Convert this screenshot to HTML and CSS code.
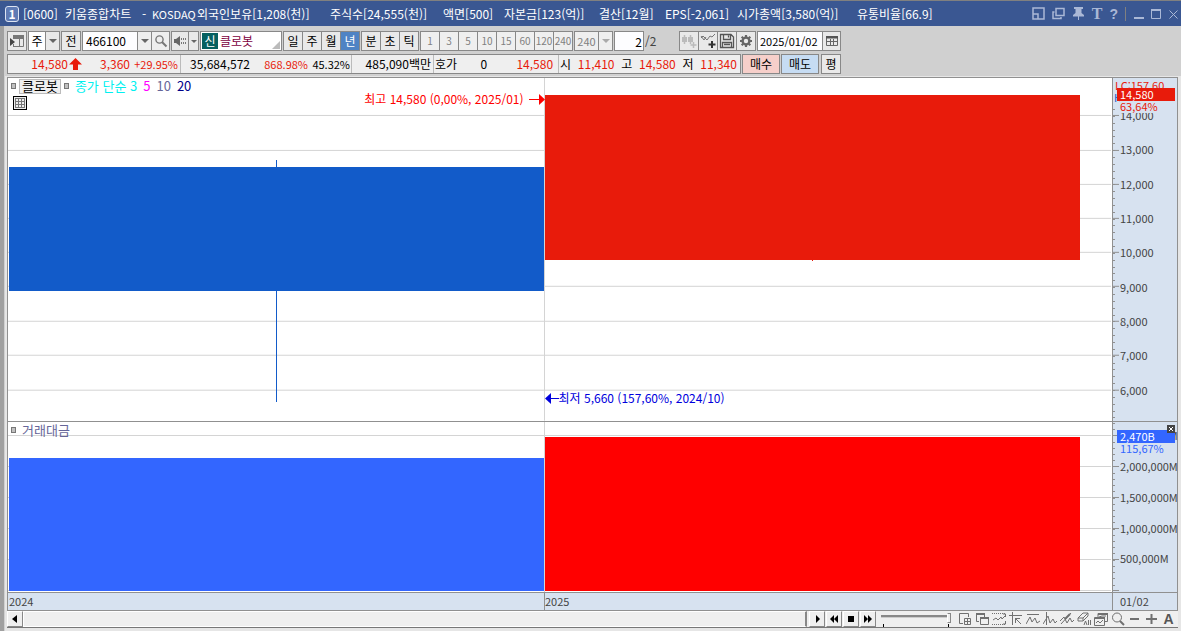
FILE: index.html
```html
<!DOCTYPE html>
<html lang="ko">
<head>
<meta charset="utf-8">
<title>키움종합차트</title>
<link rel="stylesheet" href="styles.css">
</head>
<body>
<div class="window">
  <header class="titlebar">
    <span class="badge">1</span>
    <h1 class="title">
      <span class="w42">[0600]</span><span class="w77">키움종합차트</span><span class="w10t">-</span><span class="w45 fit">KOSDAQ</span><span class="w133">외국인보유[1,208(천)]</span><span class="w113">주식수[24,555(천)]</span><span class="w61">액면[500]</span><span class="w95">자본금[123(억)]</span><span class="w66">결산[12월]</span><span class="w72">EPS[-2,061]</span><span class="w120">시가총액[3,580(억)]</span><span>유통비율[66.9]</span>
    </h1>
    <div class="wincontrols">
      <button aria-label="도킹"><svg width="13" height="13" viewBox="0 0 13 13"><path d="M1 1h11v11H1zM1 7h5v5" fill="none" stroke="currentColor" stroke-width="1.500"/></svg></button>
      <button aria-label="복제"><svg width="13" height="13" viewBox="0 0 13 13"><path d="M4 1.500h8v7H4zM2.500 5H1v6.500h8V10" fill="none" stroke="currentColor" stroke-width="1.500"/></svg></button>
      <button aria-label="고정"><svg width="13" height="15" viewBox="0 0 13 15"><path d="M2 1h9v2H9.500v4l2.500 2v1.500H7V14H6v-3.500H1V9l2.500-2V3H2z" fill="currentColor"/></svg></button>
      <button aria-label="글꼴" class="serif">T</button>
      <button aria-label="도움말" class="help">?</button>
      <i class="sep"></i>
      <button aria-label="최소화"><svg width="11" height="13" viewBox="0 0 11 13"><path d="M1 11h10" stroke="currentColor" stroke-width="2"/></svg></button>
      <button aria-label="최대화"><svg width="11" height="13" viewBox="0 0 11 13"><path d="M.5 2.500v9h9v-9z" fill="none" stroke="currentColor"/><path d="M0 3h10" stroke="currentColor" stroke-width="2"/></svg></button>
      <button aria-label="닫기"><svg width="9" height="13" viewBox="0 0 9 13"><path d="M.5 3.500l8 8M8.500 3.500l-8 8" stroke="currentColor"/></svg></button>
    </div>
  </header>

  <div class="body">
    <div class="tools">
      <div class="row">
        <button class="box sq" aria-label="패널"><svg width="14" height="14" viewBox="0 0 14 14"><path d="M3 1.500h10.500v11H3M3 4.500h10.500M9.500 4.500v8M3.500 1v4M3.500 10v3" fill="none" stroke="#777"/><path d="M4 1h10v3H4z" fill="#777"/><path d="M0 4l5 4-5 4z" fill="#444"/></svg></button>
        <div class="box group"><button class="white w17">주</button><button class="w14 arrow" aria-label="종류 선택"></button></div>
        <button class="box sq">전</button>
        <div class="box group code"><input class="codein" aria-label="종목코드" value="466100"><button class="w13 arrow" aria-label="종목 목록"></button><button class="w18" aria-label="검색"><svg width="14" height="14" viewBox="0 0 14 14"><circle cx="5.500" cy="5.500" r="3.600" fill="none" stroke="#777" stroke-width="1.400"/><path d="M8 8l4.500 4.500" stroke="#777" stroke-width="2"/></svg></button></div>
        <div class="box group"><button class="w16" aria-label="소리"><svg width="14" height="12" viewBox="0 0 14 12"><path d="M1 4h2l4-3v10L3 8H1z" fill="#666"/><path d="M8.500 3v6M10.500 3v6M12.500 3v6" stroke="#777" stroke-dasharray="2 2"/></svg></button><button class="w10 arrow small" aria-label="소리 선택"></button></div>
        <div class="box name"><span class="new">신</span><span class="stock">클로봇</span><i class="corner"></i></div>
        <div class="box group period"><button>일</button><button>주</button><button>월</button><button class="on">년</button></div>
        <div class="box group period"><button>분</button><button>초</button><button>틱</button></div>
        <div class="box group period dim"><button>1</button><button>3</button><button>5</button><button>10</button><button>15</button><button>60</button><button>120</button><button>240</button></div>
        <div class="box group dim"><button class="w24">240</button><button class="w14 arrow pale" aria-label="분 선택"></button></div>
        <input class="box count" aria-label="개수" value="2"><span class="total">/2</span>
        <div class="box group icons">
          <button aria-label="차트 추가"><svg width="16" height="16" viewBox="0 0 16 16"><path d="M1 4h5v5H1zM7 4h5v5H7z" fill="#bbb"/><path d="M3.500 2v9M9.500 2v9M12.500 9v6M9.500 12h6" stroke="#bbb" stroke-width="1.500"/></svg></button>
          <button aria-label="지표 추가"><svg width="16" height="16" viewBox="0 0 16 16"><path d="M1 5l2-2 4 4 3-4 2 1 3-3M1 3l3 4 2-3" fill="none" stroke="#777"/><path d="M12 8v7M8.500 11.500h7" stroke="#333" stroke-width="2"/></svg></button>
          <button aria-label="저장"><svg width="16" height="16" viewBox="0 0 16 16"><path d="M1.500 1.500H12L14.500 4v10.500h-13zM4.500 1.500v5h7v-5M3.500 14v-4.500h9V14M5 11.500h6M9.500 2.500v2" fill="none" stroke="#555" stroke-width="1.300"/></svg></button>
          <button aria-label="설정"><svg width="14" height="14" viewBox="0 0 14 14"><circle cx="7" cy="7" r="3.400" fill="none" stroke="#666" stroke-width="2.400"/><path d="M7 1v2M7 11v2M1 7h2M11 7h2M2.700 2.700l1.500 1.500M9.800 9.800l1.500 1.500M2.700 11.300l1.500-1.500M9.800 4.200l1.500-1.500" stroke="#666" stroke-width="2.200"/></svg></button>
        </div>
        <div class="box group"><input class="date" aria-label="날짜" value="2025/01/02"><button class="w18" aria-label="달력"><svg width="12" height="12" viewBox="0 0 12 12"><path d="M.5 1.500h11v9H.5zM4.500 4v6M7.500 4v6M1 6.500h10" fill="none" stroke="#666"/><path d="M0 1h12v2.500H0z" fill="#555"/></svg></button></div>
      </div>

      <div class="row">
        <div class="box quote">
          <div class="cell q1 red"><span class="r60">14,580</span><svg width="13" height="13" viewBox="0 0 13 13"><path d="M6.500 0L13 6.500H9V12H4V6.500H0z" fill="#e81b0b"/></svg><span class="r49">3,360</span><span class="fit r48">+29.95%</span></div>
          <div class="cell q2"><span class="r70">35,684,572</span><span class="fit red r58">868.98%</span><span class="fit r41">45.32%</span></div>
          <div class="cell q3"><span>485,090백만</span></div>
          <div class="cell q4"><span>호가</span><span class="r28">0</span><span class="red r66">14,580</span></div>
          <div class="cell q5"><span>시</span><span class="red">11,410</span><span>고</span><span class="red">14,580</span><span>저</span><span class="red">11,340</span></div>
        </div>
        <button class="box buy">매수</button>
        <button class="box sell">매도</button>
        <button class="box sq">평</button>
      </div>
    </div>

    <main class="chart">
      <section class="panel price">
        <div class="plot">
          <svg class="fill" viewBox="0 0 1104 343" preserveAspectRatio="none" shape-rendering="crispEdges">
            <path d="M0 37.500h1103M0 72.500h1103M0 106.500h1103M0 140.500h1103M0 174.500h1103M0 208.500h1103M0 243.500h1103M0 277.500h1103M0 312.500h1103M536.500 0v343" stroke="#d4d4d4" fill="none"/>
            <path d="M1 89h535v124H1zM268 82h1v242h-1z" fill="#125bc9"/>
            <path d="M537 17h535v165H537zM804 182h1v1h-1z" fill="#e81b0b"/>
          </svg>
          <div class="legend"><i class="mark"></i><button class="tag">클로봇</button><i class="mark"></i><span class="cyan">종가 단순 3</span><span class="magenta">5</span><span class="violet">10</span><span class="navy">20</span></div>
          <button class="tablebtn" aria-label="표"><svg width="12" height="12" viewBox="0 0 12 12" shape-rendering="crispEdges"><path d="M1.500 1.500h9v9h-9zM4.500 1v10M7.500 1v10M1 4.500h10M1 7.500h10" fill="none" stroke="#777"/></svg></button>
          <div class="note high"><span>최고 14,580 (0,00%, 2025/01)</span><svg width="16" height="12" viewBox="0 0 16 12"><path d="M0 6.500h11" stroke="#f00"/><path d="M10 1l6 5.500-6 5.500z" fill="#f00"/></svg></div>
          <div class="note low"><svg width="14" height="12" viewBox="0 0 14 12"><path d="M4 6.500h10" stroke="#00d"/><path d="M6 1L0 6.500l6 5.500z" fill="#00d"/></svg><span>최저 5,660 (157,60%, 2024/10)</span></div>
        </div>
        <div class="axis">
          <svg class="fill" viewBox="0 0 64 343" preserveAspectRatio="none" shape-rendering="crispEdges"><path d="M1 31v312" stroke="#909090" stroke-width="2" stroke-dasharray="1 5.860"/><path d="M0 37.500h6M0 72.500h6M0 106.500h6M0 140.500h6M0 174.500h6M0 208.500h6M0 243.500h6M0 277.500h6M0 312.500h6" stroke="#909090"/></svg>
          <span class="lc">LC:157,60</span><span class="hc">H</span>
          <ol class="scale pscale"><li>14,000</li><li>13,000</li><li>12,000</li><li>11,000</li><li>10,000</li><li>9,000</li><li>8,000</li><li>7,000</li><li>6,000</li></ol>
          <span class="now">14,580</span><span class="pct">63,64%</span>
        </div>
      </section>

      <section class="panel volume">
        <div class="plot">
          <svg class="fill" viewBox="0 0 1104 170" preserveAspectRatio="none" shape-rendering="crispEdges">
            <path d="M0 13.500h1103M0 44.500h1103M0 75.500h1103M0 106.500h1103M0 137.500h1103M0 168.500h1103M536.500 0v170" stroke="#d4d4d4" fill="none"/>
            <path d="M1 36h535v133H1z" fill="#36f"/>
            <path d="M537 15h535v154H537z" fill="#f00"/>
          </svg>
          <div class="legend"><i class="mark"></i><span class="violet">거래대금</span></div>
        </div>
        <div class="axis">
          <svg class="fill" viewBox="0 0 64 170" preserveAspectRatio="none" shape-rendering="crispEdges"><path d="M1 1v168" stroke="#909090" stroke-width="2" stroke-dasharray="1 5.200"/><path d="M0 13.500h6M0 44.500h6M0 75.500h6M0 106.500h6M0 137.500h6M0 168.500h6" stroke="#909090"/></svg>
          <ol class="scale vscale"><li>2,500,000M</li><li>2,000,000M</li><li>1,500,000M</li><li>1,000,000M</li><li>500,000M</li></ol>
          <span class="now vnow">2,470B</span><span class="pct vpct">115,67%</span>
          <button class="close" aria-label="지표 닫기"><svg width="8" height="8" viewBox="0 0 8 8"><path d="M2 2l4 4M6 2L2 6" stroke="#fff"/></svg></button>
        </div>
      </section>

      <div class="dates"><div class="years"><span>2024</span><span>2025</span></div><span class="day">01/02</span></div>
    </main>

    <footer class="bottom">
      <button class="raised" aria-label="왼쪽"><svg width="8" height="8" viewBox="0 0 8 8"><path d="M6 0v8L1 4z"/></svg></button>
      <div class="track"></div>
      <div class="player">
        <button class="raised" aria-label="오른쪽"><svg width="10" height="8" viewBox="0 0 10 8"><path d="M4 0v8l4-4z"/></svg></button>
        <button class="raised" aria-label="뒤로"><svg width="10" height="8" viewBox="0 0 10 8"><path d="M5 0v8L1 4zM9 0v8L5 4z"/></svg></button>
        <button class="raised" aria-label="정지"><svg width="10" height="8" viewBox="0 0 10 8"><path d="M2 1h6v6H2z"/></svg></button>
        <button class="raised" aria-label="앞으로"><svg width="10" height="8" viewBox="0 0 10 8"><path d="M1 0v8l4-4zM5 0v8l4-4z"/></svg></button>
      </div>
      <div class="slider"><input type="range" aria-label="확대 비율" min="0" max="100" value="100"><div class="stops"><i></i><i></i></div></div>
      <div class="drawtools">
        <button aria-label="창 추가"><svg viewBox="0 0 14 14"><path d="M5 11.500H1.500v-10h9V5M6.500 6.500h6v6h-6zM9.500 6v7M6 9.500h7"/></svg></button>
        <button aria-label="창 겹침"><svg viewBox="0 0 14 14"><path d="M4 9.500H1.500v-8h8V5M5.500 5.500h8v7h-8z"/><path d="M1 2h9M5 6h9" stroke-width="2"/></svg></button>
        <button aria-label="영역"><svg viewBox="0 0 14 14"><path d="M0 1.500h14M0 12.500h14" stroke-dasharray="1 1"/><path d="M1 8l3-2 2 2 3-3 1 2 3-3M11 2h2.500v3M11 12h2.500V9"/></svg></button>
        <button aria-label="기준선"><svg viewBox="0 0 14 14"><path d="M0 3.500h13M3.500 0v13M6 6l6 6M6 6.500h5M6.500 6v5"/></svg></button>
        <button aria-label="수평선"><svg viewBox="0 0 14 14"><path d="M1 2.500h12M0 12l4-7 2 5 3-4 2 5 3-2"/></svg></button>
        <button aria-label="수직선"><svg viewBox="0 0 14 14"><path d="M3.500 0v13M0 12l5-8 2 7 3-4 2 4 2-2"/></svg></button>
        <button aria-label="추세선"><svg viewBox="0 0 14 14"><path d="M1 12L11 1M0 9l4-4 3 6 3-5 2 4 2-2"/><path d="M5 7l5-5" stroke-width="2"/></svg></button>
        <button aria-label="모두 지우기"><svg viewBox="0 0 14 14"><path d="M1 6l5-5h5v3L6 9H1zM1 6h5l5-5M6 6v3M7 13l1.500-4 1.500 4M11.500 8v5M13.500 8v5"/></svg></button>
        <button aria-label="차트 복사"><svg viewBox="0 0 14 14"><path d="M4 5V1.500h9.500v8H11M.5 5.500h10v8H.5zM2 11l2-2 2 2 3-3M5 5l3-1 4 0"/><path d="M4 2h10M1 6h10" stroke-width="2"/></svg></button>
        <button aria-label="돋보기"><svg viewBox="0 0 14 14"><circle cx="6" cy="5.500" r="4.500"/><path d="M9 9l4 4" stroke-width="2"/></svg></button>
        <button aria-label="축소"><svg viewBox="0 0 14 14"><path d="M2 7h9" stroke-width="2"/></svg></button>
        <button aria-label="확대"><svg viewBox="0 0 14 14"><path d="M1 7h11M6.500 2v10" stroke-width="2"/></svg></button>
        <button aria-label="자동" class="auto">A</button>
      </div>
    </footer>
  </div>
</div>
</body>
</html>
```
FILE: styles.css
```css
* { box-sizing: border-box; }
body {
  margin: 0;
  font: 12px/16px "Noto Sans CJK KR", "Noto Sans", sans-serif;
  color: #000;
}
button, input { font: inherit; color: inherit; margin: 0; padding: 0; border: 0; border-radius: 0; background: none; }
button { display: flex; align-items: center; justify-content: center; white-space: nowrap; }
svg { display: block; flex: none; }
.window { height: 100vh; display: flex; flex-direction: column; background: #e6e6e6; overflow: hidden; }

.titlebar {
  height: 26px; flex: none; display: flex; align-items: center;
  background: #3a5792; border-top: 1px solid #808080; color: #fff; padding: 0 3px 0 5px;
}
.badge {
  width: 14px; height: 16px; border: 1px solid #dde4f2; border-radius: 3px; background: #5f7bb5;
  font-weight: 700; text-align: center; line-height: 14px; margin-right: 4px;
}
.title { display: flex; flex: 1; margin: 0; font-size: 12px; font-weight: 400; white-space: nowrap; }
.title span { flex: none; }
.w42 { width: 42px; } .w77 { width: 77px; } .w10t { width: 10px; } .w45 { width: 45px; } .w133 { width: 133px; }
.w113 { width: 113px; } .w61 { width: 61px; } .w95 { width: 95px; } .w66 { width: 66px; }
.w72 { width: 72px; } .w120 { width: 120px; }
.wincontrols { display: flex; align-items: center; gap: 7px; color: #aab8d6; }
.serif { font: 700 16px/16px "Liberation Serif", serif; }
.help { font: 700 14px/16px "Liberation Sans", sans-serif; }
.sep { width: 1px; height: 14px; background: #808080; }

.body { flex: 1; min-height: 0; display: flex; flex-direction: column; border-left: 4px solid #a0a0a0; box-shadow: inset 1px 0 #d0d0d0; }
.tools { flex: none; background: #d0d0d0; padding: 5px 0 2px 3px; display: flex; flex-direction: column; gap: 3px; }
.row { display: flex; gap: 1px; height: 20px; }
.box { border: 1px solid #888; background: #e9e9e9; height: 20px; flex: none; }
.sq { width: 20px; }
.group { display: flex; }
.group > * + * { border-left: 1px solid #888; }
.white { background: #fff; }
.w10 { width: 10px; } .w13 { width: 14px; } .w14 { width: 14px; } .w16 { width: 16px; }
.w17 { width: 16px; } .w18 { width: 18px; } .w24 { width: 23px; }
.arrow::after { content: ""; border: 4px solid transparent; border-top-color: #666; border-bottom: 0; }
.small::after { border-width: 3px; border-bottom: 0; }
.pale::after { border-top-color: #aaa; }
.code { background: #eee; }
.codein { width: 54px; padding-left: 3px; background: #fdfdff; }
.name { width: 82px; display: flex; background: #fff; position: relative; padding: 1px; gap: 2px; }
.new { width: 16px; background: #066060; color: #fff; text-align: center; }
.stock { color: #800040; }
.corner { position: absolute; right: 1px; bottom: 1px; border: 4px solid #bbb; border-top-color: transparent; border-left-color: transparent; }
.period button { width: 19px; }
.period button:first-child { width: 18px; }
.period .on { background: #4f83c4; color: #fff; }
.dim { color: #808080; }
.dim button { font-size: 11px; background: #efefef; }
.dim.period button { font-size: 10px; }
.count { width: 30px; text-align: right; padding-right: 1px; background: #fdfdff; }
.total { width: 33px; line-height: 20px; color: #444; }
.icons button { width: 19px; }
.icons button:first-child { width: 18px; }
.date { width: 64px; padding-left: 2px; background: #fdfdff; font-size: 11px; }

.quote { width: 734px; display: flex; background: #efefef; line-height: 18px; white-space: nowrap; }
.cell { display: flex; align-items: center; }
.cell + .cell { border-left: 1px solid #bbb; }
.cell span { flex: none; }
.red { color: #e81b0b; }
.fit { font-size: 11px; }
.q1 { width: 172px; } .q2 { width: 171px; } .q3 { width: 82px; justify-content: flex-end; padding-right: 2px; }
.q4 { width: 125px; padding-left: 1px; } .q5 { flex: 1; justify-content: space-between; padding: 0 3px 0 1px; }
.r60, .r49, .r48, .r70, .r58, .r41, .r28, .r66 { text-align: right; }
.r60 { width: 60px; margin-right: 1px; } .r49 { width: 48px; } .r48 { width: 48px; } .r70 { width: 69px; }
.r58 { width: 58px; } .r41 { width: 42px; } .r28 { width: 30px; } .r66 { width: 66px; }
.buy { width: 38px; background: #f6cfca; }
.sell { width: 38px; background: #c6dcf3; margin-right: 1px; }

.chart {
  flex: 1; min-height: 0; margin: 1px 3px 0; border: 1px solid #909090; background: #fff;
  display: flex; flex-direction: column;
}
.panel { display: flex; min-height: 0; border-bottom: 1px solid #909090; }
.price { flex: 344 1 0; }
.volume { flex: 171 1 0; }
.plot { flex: 1; position: relative; }
.axis { width: 65px; flex: none; position: relative; border-left: 1px solid #909090; background: #d7e2f0; color: #444; overflow: hidden; font-size: 11px; }
.fill { position: absolute; inset: 0; width: 100%; height: 100%; }
.legend { position: relative; display: flex; align-items: center; gap: 6px; height: 16px; padding-left: 3px; font-size: 13px; }
.mark { width: 5px; height: 6px; border: 1px solid #777; background: #c0c0c0; }
.tag { height: 15px; padding: 0 2px; margin: 0 -3px; border: 1px solid #bbb; background: #efefef; }
.cyan { color: #00f0f0; } .magenta { color: #f0f; } .violet { color: #669; } .navy { color: #008; }
.tablebtn { position: relative; width: 14px; height: 14px; margin: 2px 0 0 5px; border: 1px solid #000; background: #eee; }
.note { position: absolute; display: flex; align-items: center; white-space: nowrap; }
.high { right: 51.4%; top: 3.700%; gap: 5px; color: #f00; }
.low { left: 48.6%; top: 91%; color: #00d; }
.scale { list-style: none; margin: 0; padding: 0; position: absolute; left: 7px; display: flex; flex-direction: column; justify-content: space-between; }
.pscale { top: 8.500%; bottom: 6.700%; }
.vscale { top: 3%; bottom: 15%; }
.lc, .hc, .now, .pct { position: absolute; white-space: nowrap; }
.lc { left: 2px; top: 0; line-height: 14px; color: #e81b0b; }
.hc { left: 1px; top: 11px; color: #125bc9; }
.pct { left: 7px; top: 22px; line-height: 13px; color: #e81b0b; background: #d7e2f0; }
.now { z-index: 1; left: 4px; top: 10px; width: 58px; height: 13px; line-height: 13px; padding-left: 3px; background: #e81b0b; color: #fff; }
.vnow { top: 8px; background: #36f; }
.vpct { top: 20px; color: #36f; }
.close { position: absolute; z-index: 2; right: 2px; top: 3px; width: 8px; height: 8px; background: #444; }
.dates { flex: none; height: 17px; display: flex; background: #d7e2f0; color: #444; font-size: 11px; }
.years { flex: 1; display: flex; padding-right: 32px; }
.years span { flex: 1; padding-left: 1px; }
.years span + span { border-left: 1px solid #909090; padding-left: 0; }
.day { width: 65px; border-left: 1px solid #909090; padding-left: 7px; }

.bottom { flex: none; height: 17px; margin: 0 3px 3px; display: flex; background: #efefef; border-bottom: 1px solid #777; }
.raised { width: 16px; height: 16px; background: #efefef; border: 1px solid #fff; border-right-color: #888; border-bottom-color: #888; }
.track { flex: 1; border: 1px solid #fff; border-right: 2px solid #888; }
.player { display: flex; gap: 1px; padding-left: 2px; }
.slider { width: 70px; margin-left: 5px; }
.slider input { display: block; width: 70px; height: 11px; appearance: none; }
.slider input::-webkit-slider-runnable-track { height: 3px; background: #888; border-bottom: 1px solid #ccc; }
.slider input::-webkit-slider-thumb { appearance: none; width: 4px; height: 10px; margin-top: -2px; background: #efefef; border: 1px solid #888; border-left-color: #fff; }
.stops { display: flex; justify-content: space-between; padding: 2px 2px 0; }
.stops i { width: 1px; height: 3px; background: #000; }
.drawtools { display: flex; align-items: center; gap: 3px; margin: 0 3px 0 7px; color: #555; }
.drawtools svg { width: 14px; height: 14px; fill: none; stroke: #707070; }
.auto { width: 13px; font: 700 14px/14px "Liberation Sans", sans-serif; }
```
